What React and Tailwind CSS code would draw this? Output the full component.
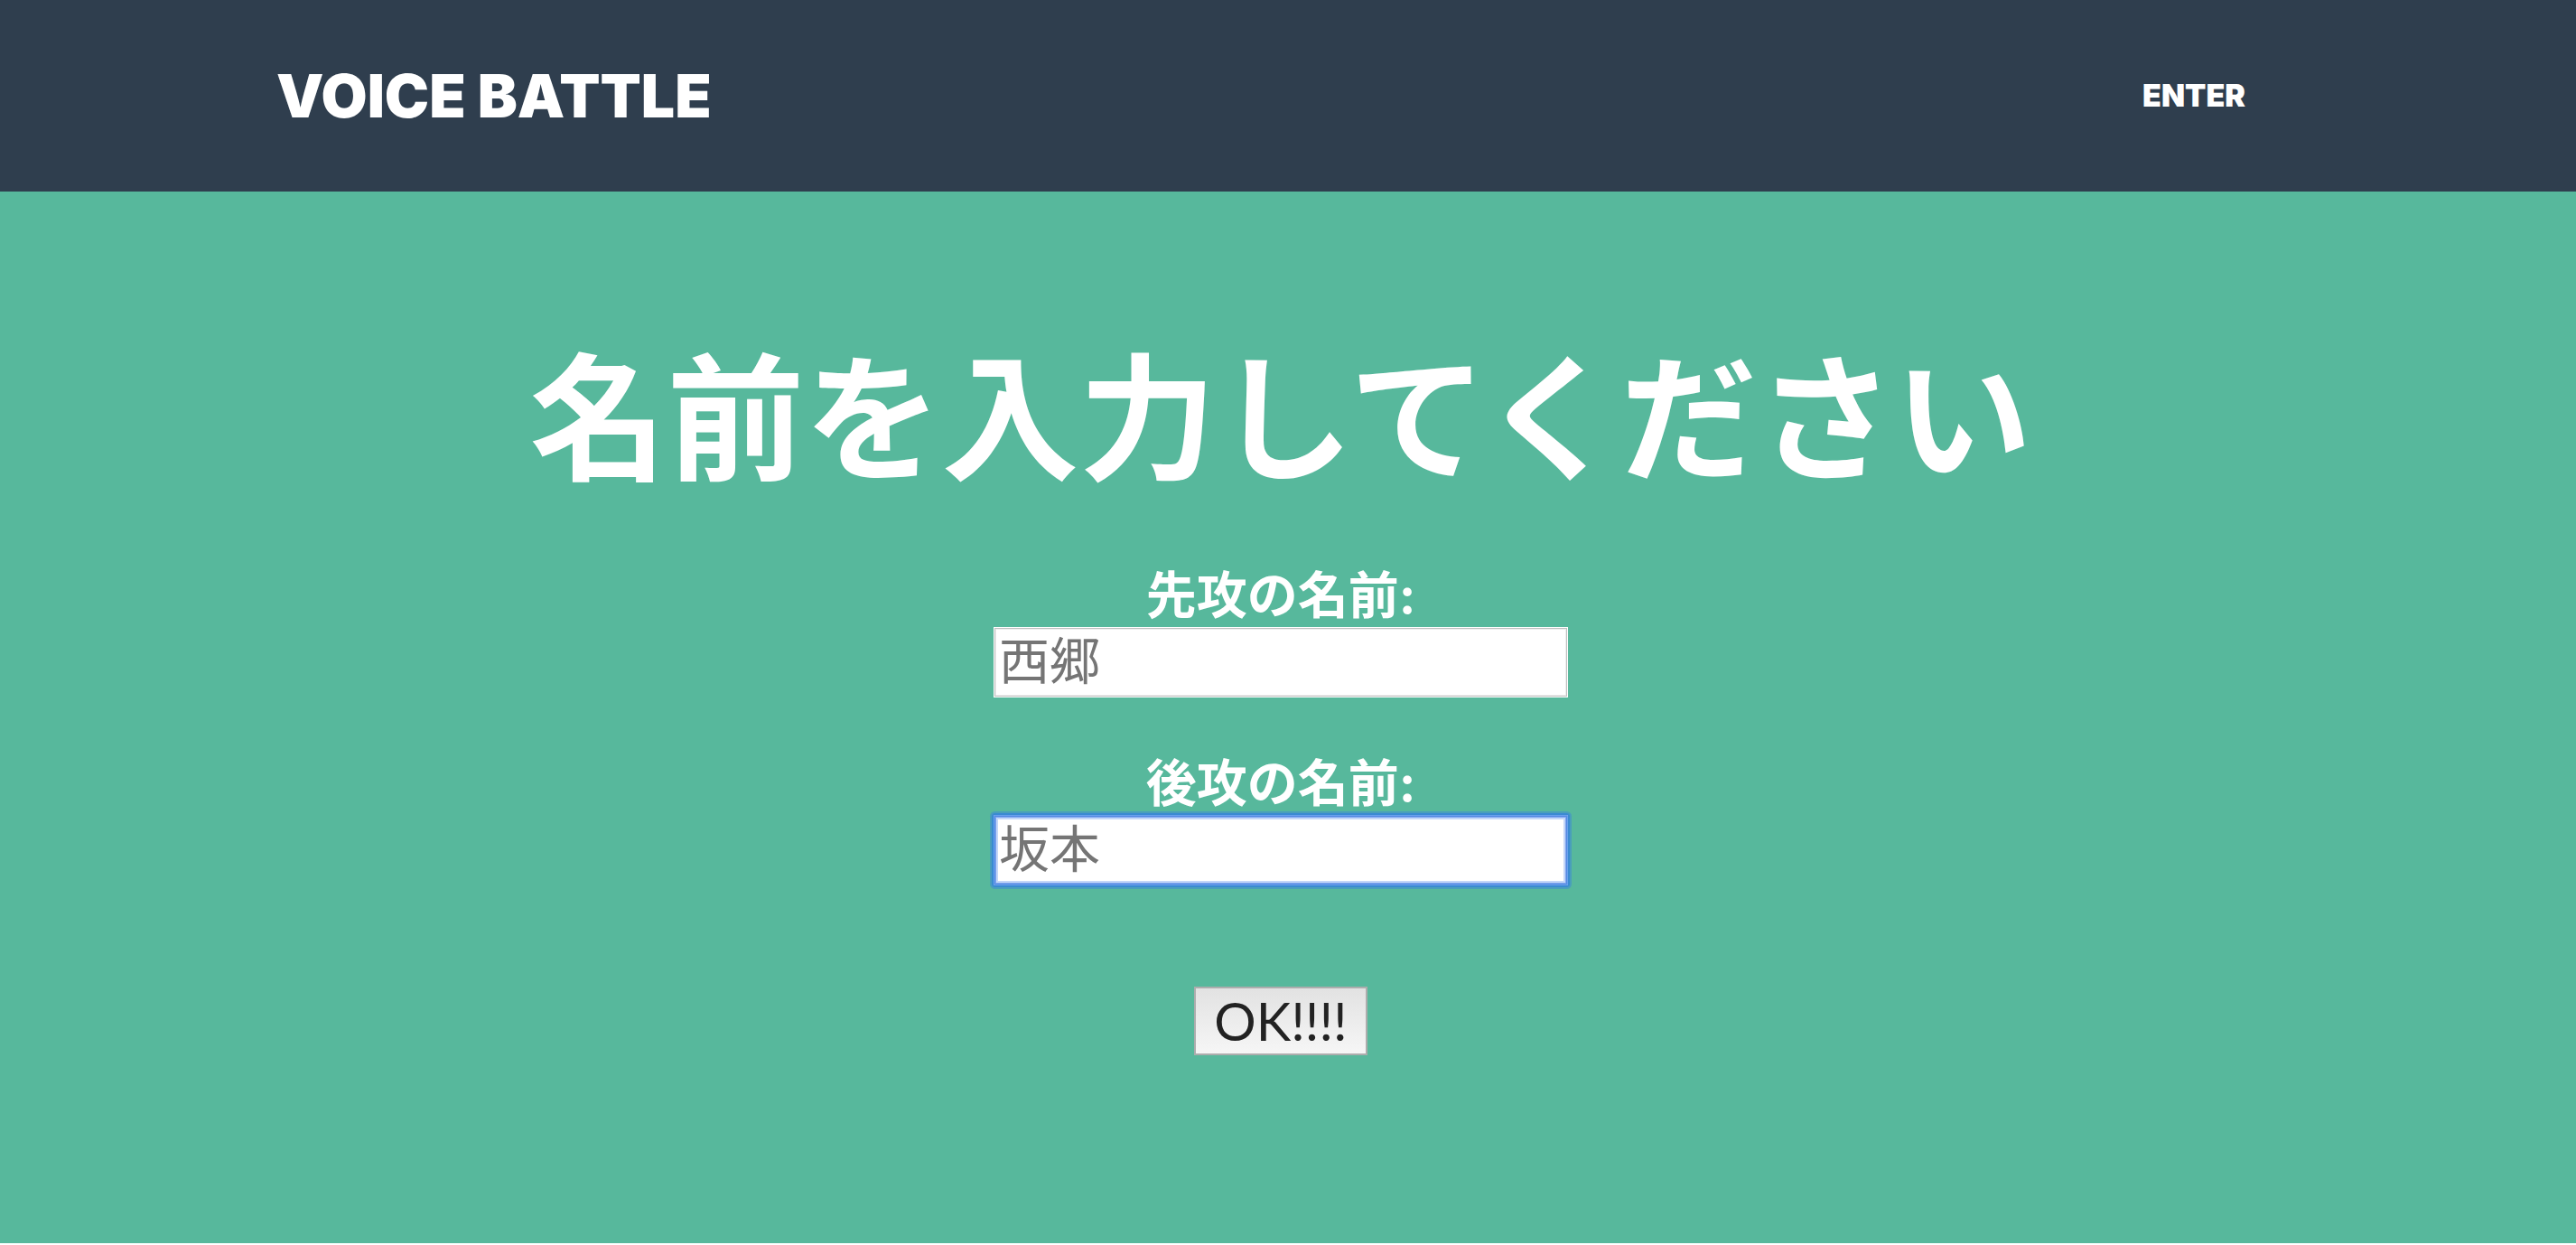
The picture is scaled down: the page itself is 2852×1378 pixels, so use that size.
const fieldBase =
  'mx-auto block h-[78px] w-[636px] max-w-full bg-white px-1.5 pb-1.5 text-[56px] leading-[72px] text-[#222222] outline-none placeholder:text-[#757575] placeholder:opacity-100';

function NameField({ id, label, placeholder, fieldClass }) {
  return (
    <div className="w-full">
      <label
        htmlFor={id}
        className="block pt-3.5 text-[56px] leading-[70px] font-bold font-['Inter','Noto_Sans_CJK_JP',sans-serif]"
      >
        {label}
      </label>
      <input id={id} name={id} type="text" placeholder={placeholder} className={`${fieldBase} ${fieldClass}`} />
    </div>
  );
}

export default function App() {
  return (
    <div className="bg-white pb-0.5 font-['Lato','Noto_Sans_CJK_JP',sans-serif] text-white">
      <nav className="bg-[#2f3e4e] font-['Inter',sans-serif]">
        <div className="mx-auto flex h-[212px] max-w-[2280px] items-center justify-between px-5">
          <a href="#top" className="text-[66px] leading-[96px] font-black">
            VOICE BATTLE
          </a>
          <a href="#enter" className="mr-9 px-6 py-4 text-[34px] leading-[48px] font-black">
            ENTER
          </a>
        </div>
      </nav>
      <main id="top" className="bg-[#57b89c] pt-[158px] pb-[208px] pr-4 text-center">
        <h1 className="text-[152px] leading-[182px] font-bold">名前を入力してください</h1>
        <form className="mt-[58px] flex flex-col items-center" onSubmit={(e) => e.preventDefault()}>
          <div className="flex w-full flex-col gap-[46px]">
            <NameField
              id="first"
              label="先攻の名前:"
              placeholder="西郷"
              fieldClass="shadow-[inset_0_0_0_1px_#ffffff,inset_0_0_0_2px_#c0c0c0,inset_0_0_0_3px_#eeeeee]"
            />
            <NameField
              id="second"
              label="後攻の名前:"
              placeholder="坂本"
              fieldClass="rounded-xs shadow-[inset_0_0_0_1px_#6ba2ee,inset_0_0_0_2px_#5588e0,inset_0_0_0_3px_#7fa6f0,inset_0_0_0_5px_#c5d7f8,0_0_0_2px_#3a8ad2,0_0_0_4px_#4a9fba]"
            />
          </div>
          <button
            type="submit"
            className="mt-28 h-[76px] w-48 border-2 border-[#adadad] bg-linear-to-b from-[#e2e2e2] to-[#f6f6f6] text-[58px] leading-[70px] text-[#222222]"
          >
            OK!!!!
          </button>
        </form>
      </main>
    </div>
  );
}
